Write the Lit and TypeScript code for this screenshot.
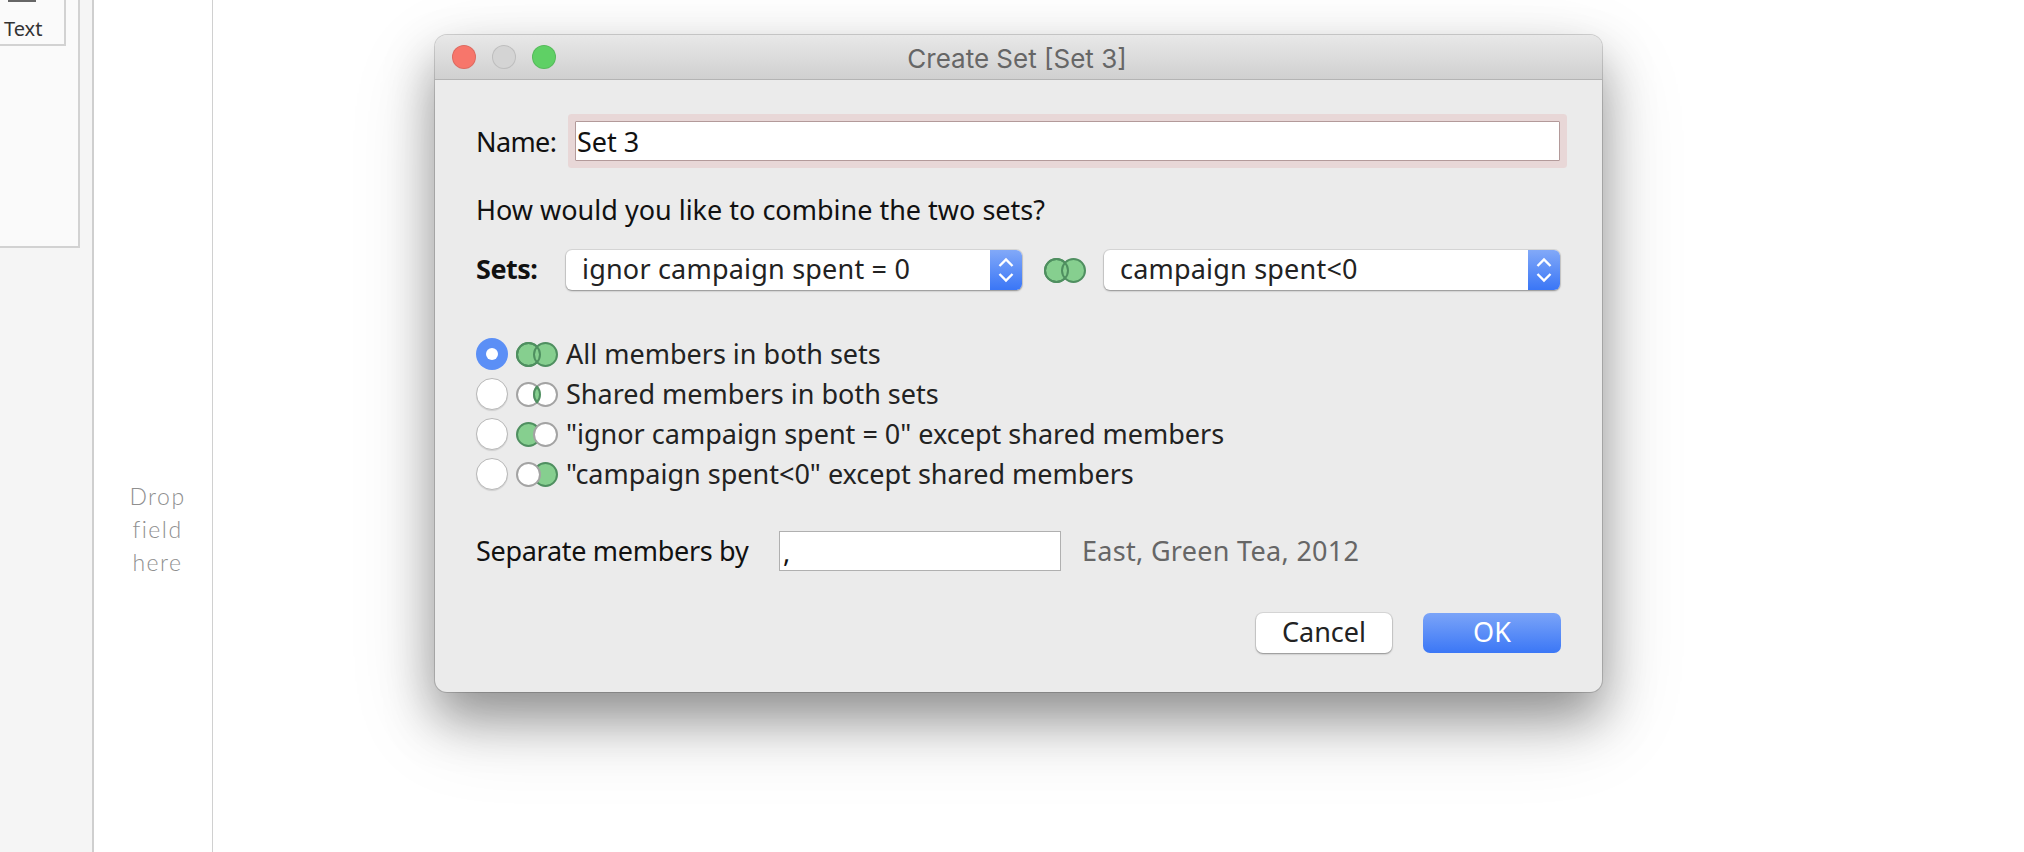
import { LitElement, html, svg, css } from 'lit';
import { customElement } from 'lit/decorators.js';

type VennMode = 'all' | 'shared' | 'left' | 'right';

const GREEN = '#86cf8f';
const GREEN_LINE = '#4f8f60';
const GRAY_LINE = '#a3a3a3';

function venn(mode: VennMode) {
	const circle = (cx: number, fill: string, stroke: string) =>
		svg`<circle cx=${cx} cy="12.5" r="11.5" fill=${fill} stroke=${stroke} stroke-width="2"></circle>`;
	const parts = {
		all: svg`${circle(12.5, GREEN, GREEN_LINE)}${circle(29.5, GREEN, GREEN_LINE)}${circle(12.5, 'none', GREEN_LINE)}`,
		shared: svg`${circle(12.5, '#fff', GRAY_LINE)}${circle(29.5, '#fff', GRAY_LINE)}
			<path d="M21 4.75A11.5 11.5 0 0 1 21 20.25A11.5 11.5 0 0 1 21 4.75Z" fill=${GREEN} stroke=${GREEN_LINE} stroke-width="2"></path>`,
		left: svg`${circle(12.5, GREEN, GREEN_LINE)}${circle(29.5, '#fff', GRAY_LINE)}`,
		right: svg`${circle(29.5, GREEN, GREEN_LINE)}${circle(12.5, '#fff', GRAY_LINE)}`,
	};
	return html`<svg class="venn" width="42" height="25" viewBox="0 0 42 25">${parts[mode]}</svg>`;
}

const OPTIONS: { mode: VennMode; label: string; checked?: boolean }[] = [
	{ mode: 'all', label: 'All members in both sets', checked: true },
	{ mode: 'shared', label: 'Shared members in both sets' },
	{ mode: 'left', label: '"ignor campaign spent = 0" except shared members' },
	{ mode: 'right', label: '"campaign spent<0" except shared members' },
];

@customElement('app-root')
export class AppRoot extends LitElement {
	private renderSelect(label: string) {
		return html`<div class="select">
			<span class="select-label">${label}</span>
			<span class="stepper">
				<svg width="16" height="28" viewBox="0 0 16 28" fill="none" stroke="#fff" stroke-width="2.4">
					<path d="M1.5 10L8 3.5L14.5 10"></path>
					<path d="M1.5 18L8 24.5L14.5 18"></path>
				</svg>
			</span>
		</div>`;
	}

	protected render() {
		return html`
			<div class="page">
				<div class="side">
					<div class="panel">
						<div class="card">
							<span class="card-icon"></span>
							<span class="card-label">Text</span>
						</div>
					</div>
				</div>
				<div class="drop">
					<span>Drop</span>
					<span>field</span>
					<span>here</span>
				</div>
				<div class="canvas"></div>
			</div>

			<div class="dialog">
				<div class="titlebar">
					<span class="light red"></span>
					<span class="light idle"></span>
					<span class="light green"></span>
					<span class="title">Create Set [Set 3]</span>
				</div>
				<div class="body">
					<div class="row name-row">
						<label class="name-label">Name:</label>
						<input class="field name-field" .value=${'Set 3'} />
					</div>
					<div class="question">How would you like to combine the two sets?</div>
					<div class="row sets-row">
						<b class="sets-label">Sets:</b>
						${this.renderSelect('ignor campaign spent = 0')}
						${venn('all')}
						${this.renderSelect('campaign spent<0')}
					</div>
					<div class="options">
						${OPTIONS.map(
							(o) => html`<div class="option">
								<span class="radio ${o.checked ? 'checked' : ''}"></span>
								${venn(o.mode)}
								<span class="option-label">${o.label}</span>
							</div>`,
						)}
					</div>
					<div class="row separator-row">
						<label class="separator-label">Separate members by</label>
						<input class="field separator-field" .value=${','} />
						<span class="example">East, Green Tea, 2012</span>
					</div>
					<div class="buttons">
						<button class="button">Cancel</button>
						<button class="button primary">OK</button>
					</div>
				</div>
			</div>
		`;
	}

	static styles = css`
		* {
			box-sizing: border-box;
		}

		:host {
			display: block;
			position: relative;
			width: 2024px;
			height: 852px;
			overflow: hidden;
			background: #fff;
			font-family: 'Noto Sans', sans-serif;
			font-size: 27px;
			color: #111;
		}

		.page {
			display: flex;
			height: 100%;
		}

		.side {
			width: 94px;
			background: #f5f5f5;
			border-right: 2px solid #cfcfcf;
		}

		.panel {
			width: 80px;
			height: 248px;
			background: #fafafa;
			border-right: 2px solid #d2d2d2;
			border-bottom: 2px solid #d2d2d2;
		}

		.card {
			display: flex;
			flex-direction: column;
			width: 66px;
			height: 46px;
			background: #fafafa;
			border-right: 2px solid #d2d2d2;
			border-bottom: 2px solid #d2d2d2;
		}

		.card-icon {
			width: 28px;
			height: 2px;
			margin-left: 8px;
			background: #666;
		}

		.card-label {
			margin: 15px 0 0 4px;
			font-size: 20px;
			line-height: 24px;
			color: #333;
		}

		.drop {
			display: flex;
			flex-direction: column;
			align-items: center;
			width: 119px;
			padding: 480px 0 0 9px;
			border-right: 1px solid #d0d0d0;
			font-family: 'Lato', sans-serif;
			font-size: 23px;
			font-weight: 300;
			line-height: 33px;
			letter-spacing: 1.5px;
			color: #8f8f8f;
		}

		.canvas {
			flex: 1;
		}

		.dialog {
			position: absolute;
			left: 435px;
			top: 35px;
			width: 1167px;
			height: 657px;
			display: flex;
			flex-direction: column;
			background: #ebebeb;
			border-radius: 12px;
			box-shadow:
				0 0 0 1px rgba(0, 0, 0, 0.16),
				0 26px 50px rgba(0, 0, 0, 0.36),
				0 30px 90px rgba(0, 0, 0, 0.14);
		}

		.titlebar {
			display: flex;
			align-items: center;
			gap: 16px;
			position: relative;
			height: 45px;
			padding-left: 17px;
			border-radius: 12px 12px 0 0;
			border-bottom: 1px solid #b4b4b4;
			background: linear-gradient(#e8e8e8, #d0d0d0);
		}

		.light {
			width: 24px;
			height: 24px;
			border-radius: 50%;
			border: 1px solid rgba(0, 0, 0, 0.1);
		}

		.red {
			background: #f7766b;
		}

		.idle {
			background: #d4d4d4;
		}

		.green {
			background: #5fd065;
		}

		.title {
			position: absolute;
			left: 0;
			right: 3px;
			padding-top: 2px;
			text-align: center;
			font-family: 'Inter', sans-serif;
			font-size: 26px;
			color: #666;
		}

		.body {
			flex: 1;
			padding: 41px 42px 0 41px;
		}

		.row {
			display: flex;
			align-items: center;
			height: 40px;
		}

		.field {
			height: 40px;
			padding: 0 1px;
			border: 1px solid #b0b0b0;
			border-radius: 0;
			outline: none;
			background: #fff;
			font: inherit;
			color: #111;
		}

		.name-label {
			width: 99px;
			letter-spacing: -0.6px;
		}

		.name-field {
			flex: 1;
			border-color: #b39a9a;
			box-shadow: 0 0 0 7px #e8d7d7;
			border-radius: 1px;
		}

		.question {
			height: 40px;
			margin-top: 30px;
			line-height: 38px;
		}

		.sets-row {
			margin-top: 19px;
		}

		.sets-label {
			width: 90px;
			padding-bottom: 4px;
			letter-spacing: -0.5px;
		}

		.select {
			display: flex;
			flex: 1;
			height: 40px;
			background: #fff;
			border-radius: 6px;
			box-shadow:
				0 0 0 1px rgba(0, 0, 0, 0.08),
				0 1px 2px rgba(0, 0, 0, 0.35);
			color: #222;
		}

		.select-label {
			flex: 1;
			padding-left: 16px;
			line-height: 38px;
			letter-spacing: 0.2px;
		}

		.stepper {
			display: flex;
			align-items: center;
			justify-content: center;
			width: 32px;
			border-radius: 0 6px 6px 0;
			background: linear-gradient(#82a9f8, #3a76f6);
		}

		.venn {
			flex: none;
			display: block;
		}

		.sets-row .venn {
			margin: 0 18px 0 22px;
		}

		.options {
			margin-top: 44px;
		}

		.option {
			display: flex;
			align-items: center;
			height: 40px;
			color: #222;
		}

		.option-label {
			padding-bottom: 2px;
		}

		.radio {
			display: flex;
			align-items: center;
			justify-content: center;
			width: 32px;
			height: 32px;
			margin-right: 8px;
			border-radius: 50%;
			background: #fff;
			border: 1px solid #b8b8b8;
			box-shadow: 0 1px 1px rgba(0, 0, 0, 0.12);
		}

		.radio.checked {
			border: none;
			background: #5b8ff6;
			box-shadow: none;
		}

		.radio.checked::after {
			content: '';
			width: 12px;
			height: 12px;
			border-radius: 50%;
			background: #fff;
		}

		.option .venn {
			margin-right: 8px;
		}

		.separator-row {
			margin-top: 37px;
		}

		.separator-label {
			width: 303px;
			padding-bottom: 2px;
			letter-spacing: -0.3px;
		}

		.separator-field {
			width: 282px;
			padding-left: 3px;
		}

		.example {
			margin-left: 21px;
			padding-bottom: 2px;
			letter-spacing: 0.3px;
			color: #666;
		}

		.buttons {
			display: flex;
			justify-content: flex-end;
			gap: 31px;
			margin: 42px -1px 0 0;
		}

		.button {
			width: 136px;
			height: 40px;
			padding: 0 0 4px;
			border: none;
			border-radius: 7px;
			background: #fff;
			box-shadow:
				0 0 0 1px rgba(0, 0, 0, 0.08),
				0 1px 2px rgba(0, 0, 0, 0.35);
			font: inherit;
			color: #222;
		}

		.button.primary {
			width: 138px;
			background: linear-gradient(#7ba4f8, #3b77f6);
			box-shadow: none;
			color: #fff;
		}
	`;
}
